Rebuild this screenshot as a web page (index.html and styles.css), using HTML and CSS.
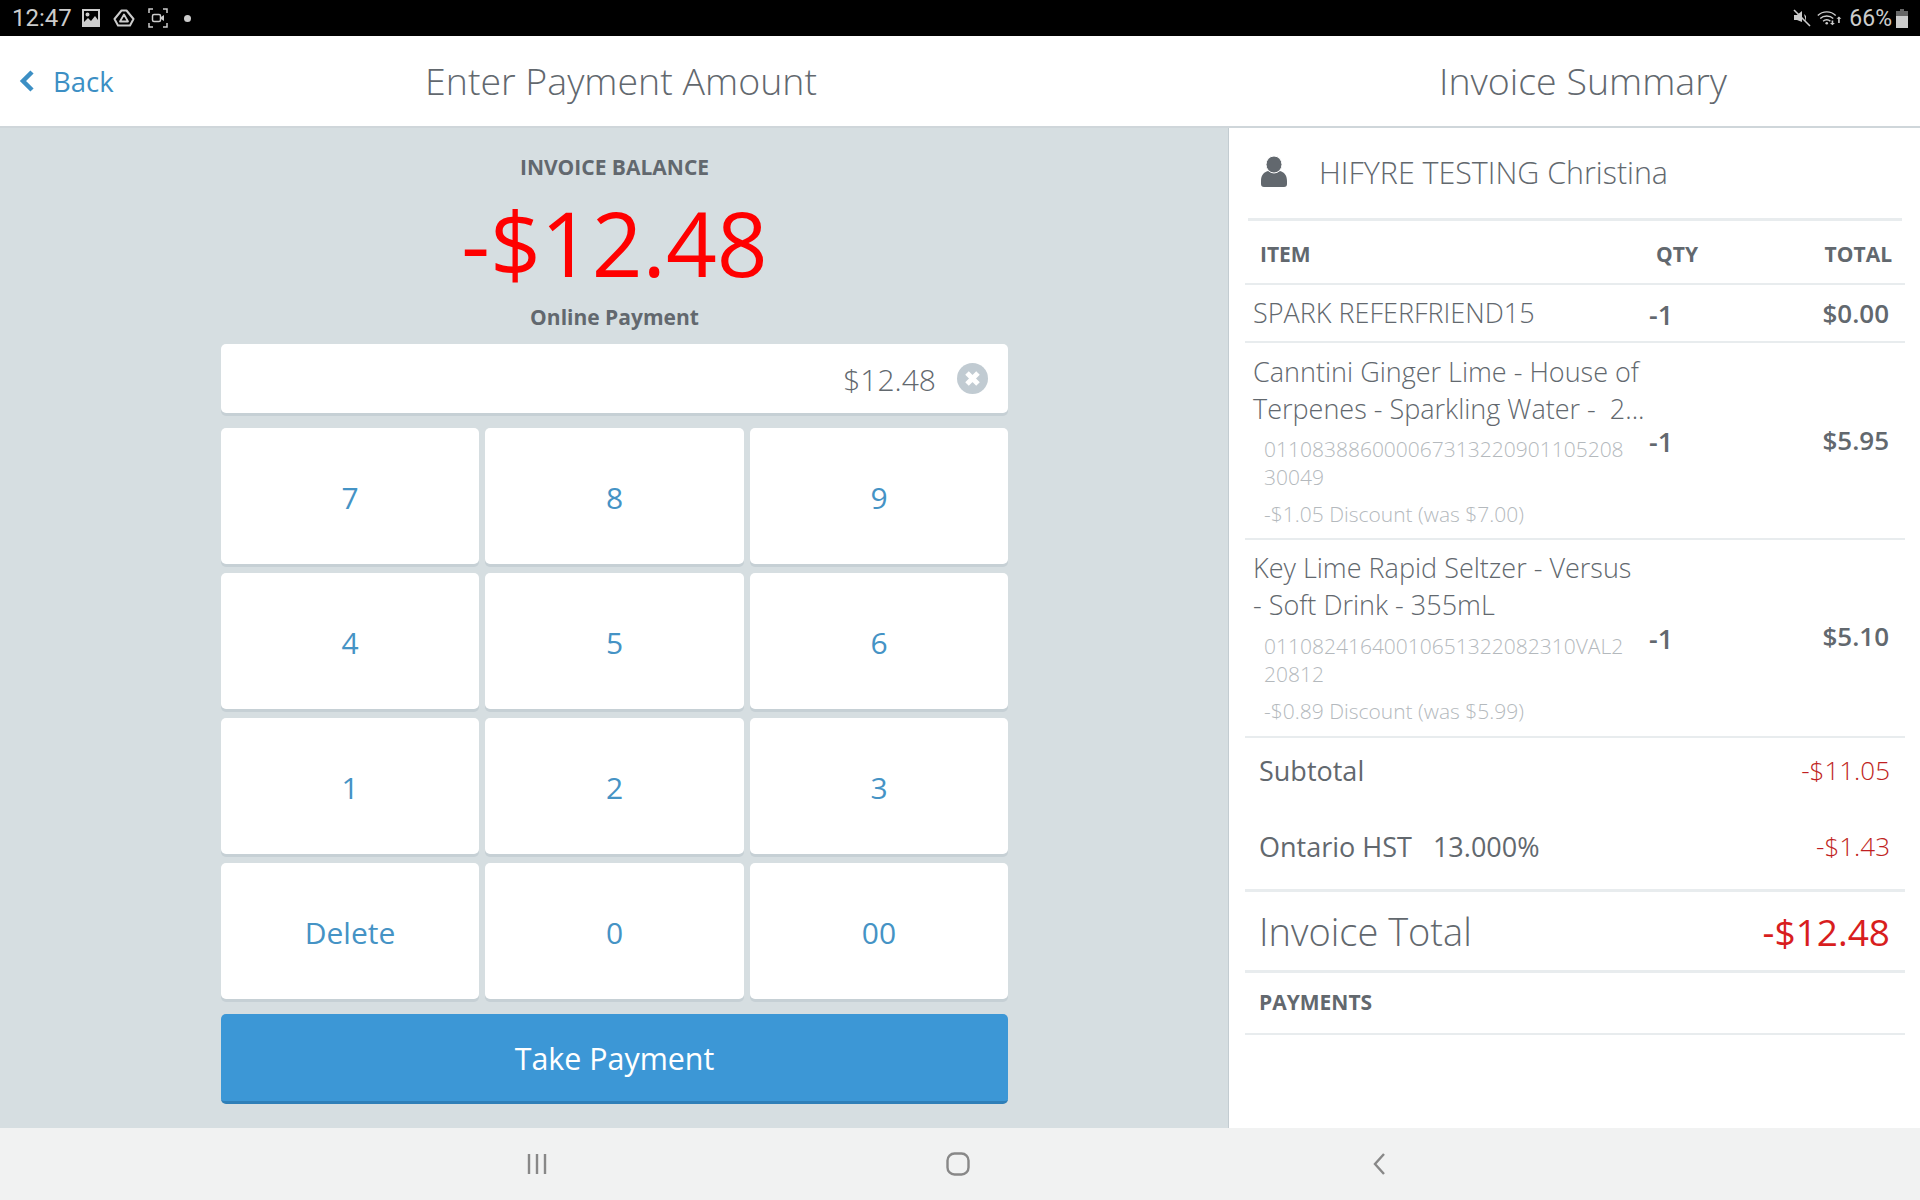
FILE: index.html
```html
<!DOCTYPE html>
<html lang="en">
<head>
<meta charset="utf-8">
<title>Enter Payment Amount</title>
<link rel="stylesheet" href="styles.css">
</head>
<body>
<div class="app">
  <div class="status">
    <div class="status-left">
      <span class="clock">12:47</span>
      <svg class="si" width="20" height="20" viewBox="0 0 20 20"><path fill="#ccc" fill-rule="evenodd" d="M1 1h18v18H1zM3 3v11l4-4 3 3 4-5 3 4V3zM6.500 4.500a2 2 0 1 1 0 4 2 2 0 0 1 0-4z"/></svg>
      <svg class="si si-drive" width="22" height="20" viewBox="0 0 22 20"><path fill="none" stroke="#ccc" stroke-width="2" stroke-linejoin="round" d="M8.500 2.500h5L20.500 11 17 17.500H5L1.500 11z"/><path fill="none" stroke="#ccc" stroke-width="1.800" stroke-linejoin="round" d="M11 6.500l4 7H7z"/></svg>
      <svg class="si" width="20" height="20" viewBox="0 0 20 20"><path fill="none" stroke="#ccc" stroke-width="1.500" d="M1 5V1h4M15 1h4v4M19 15v4h-4M5 19H1v-4"/><rect x="4.500" y="6.500" width="8" height="7" rx="1.500" fill="none" stroke="#ccc" stroke-width="1.500"/><path fill="#ccc" d="M13 9l3-2v6l-3-2z"/></svg>
      <span class="dot"></span>
    </div>
    <div class="status-right">
      <svg class="mute" width="18" height="18" viewBox="0 0 18 18"><path fill="#ccc" d="M1 6h3l5-4v11L4 11H1zM11 5l2 2v6z"/><path stroke="#ccc" stroke-width="1.600" d="M1 1l16 16"/></svg>
      <svg class="wifi" width="26" height="18" viewBox="0 0 32 20"><g fill="none" stroke="#ccc" stroke-width="1.700"><path d="M1 7c6-6 16-6 22 0"/><path d="M4 10.500c4-4 12-4 16 0"/><path d="M7.500 14c2.500-2.500 6.500-2.500 9 0"/></g><circle cx="12" cy="16.500" r="1.600" fill="#ccc"/><path fill="#ccc" d="M18 13h2v3h2l-3 3-3-3h2zM27 8l3 3h-2v5h-2v-5h-2z"/></svg>
      <span class="pct">66%</span>
      <svg class="battery" width="12" height="19" viewBox="0 0 12 19"><path fill="#666" d="M4 0h4v2h4v17H0V2h4z"/><rect y="7" width="12" height="12" fill="#ccc"/></svg>
    </div>
  </div>

  <header class="topbar">
    <div class="back">
      <svg width="16" height="22" viewBox="0 0 16 22"><path fill="none" stroke="#3c8fc4" stroke-width="4.500" d="M13 2L4 11l9 9"/></svg>
      <span>Back</span>
    </div>
    <h1 class="title title-main">Enter Payment Amount</h1>
    <h1 class="title title-side">Invoice Summary</h1>
  </header>

  <main class="content">
    <section class="pay">
      <div class="pay-label">INVOICE BALANCE</div>
      <div class="pay-amount">-$12.48</div>
      <div class="pay-method">Online Payment</div>
      <div class="pay-input">
        <span class="pay-value">$12.48</span>
        <svg width="31" height="31" viewBox="0 0 31 31"><circle cx="15.500" cy="15.500" r="15.500" fill="#c1cbd2"/><path stroke="#fff" stroke-width="5" d="M10 10l11 11M21 10L10 21"/></svg>
      </div>
      <div class="keys">
        <div class="key">7</div><div class="key">8</div><div class="key">9</div>
        <div class="key">4</div><div class="key">5</div><div class="key">6</div>
        <div class="key">1</div><div class="key">2</div><div class="key">3</div>
        <div class="key">Delete</div><div class="key">0</div><div class="key">00</div>
      </div>
      <button class="take">Take Payment</button>
    </section>

    <aside class="summary">
      <div class="customer">
        <svg width="26" height="31" viewBox="0 0 26 31"><path fill="#62686e" d="M0 25c0-6 3-9 7-10 3 2 9 2 12 0 4 1 7 4 7 10v3c0 2-1 3-3 3H3c-2 0-3-1-3-3z"/><ellipse cx="13" cy="8.500" rx="8" ry="8.500" fill="#62686e" stroke="#fff"/></svg>
        <span class="customer-name">HIFYRE TESTING Christina</span>
      </div>
      <div class="thead">
        <span>ITEM</span><span class="th-qty">QTY</span><span class="th-total">TOTAL</span>
      </div>
      <div class="row row-first">
        <div class="item"><div class="name">SPARK REFERFRIEND15</div></div>
        <div class="qty">-1</div><div class="total">$0.00</div>
      </div>
      <div class="row row-big">
        <div class="item">
          <div class="name">Canntini Ginger Lime - House of Terpenes - Sparkling Water -&nbsp; 2...</div>
          <div class="code">011083886000067313220901105208 30049</div>
          <div class="disc">-$1.05 Discount (was $7.00)</div>
        </div>
        <div class="qty">-1</div><div class="total">$5.95</div>
      </div>
      <div class="row row-big row-last">
        <div class="item">
          <div class="name">Key Lime Rapid Seltzer - Versus - Soft Drink - 355mL</div>
          <div class="code">01108241640010651322082310VAL2 20812</div>
          <div class="disc">-$0.89 Discount (was $5.99)</div>
        </div>
        <div class="qty">-1</div><div class="total">$5.10</div>
      </div>
      <div class="totals">
        <div class="line"><span>Subtotal</span><span class="neg">-$11.05</span></div>
        <div class="line"><span>Ontario HST &nbsp; 13.000%</span><span class="neg">-$1.43</span></div>
      </div>
      <div class="grand"><span>Invoice Total</span><span class="grand-val">-$12.48</span></div>
      <div class="payments">PAYMENTS</div>
    </aside>
  </main>

  <nav class="navbar">
    <svg class="nav-recent" width="24" height="24" viewBox="0 0 24 24"><path stroke="#888" stroke-width="2.400" d="M4 2v20M12 2v20M20 2v20"/></svg>
    <svg class="nav-home" width="24" height="24" viewBox="0 0 24 24"><rect x="1.500" y="1.500" width="21" height="21" rx="7" fill="none" stroke="#888" stroke-width="2.400"/></svg>
    <svg class="nav-back" width="14" height="24" viewBox="0 0 14 24"><path fill="none" stroke="#888" stroke-width="2.400" d="M12 2L3 12l9 10"/></svg>
  </nav>
</div>
</body>
</html>
```
FILE: styles.css
```css
* { box-sizing: border-box; }
html, body { margin: 0; padding: 0; }
body { font-family: "Open Sans", "Liberation Sans", sans-serif; color: #62686e; background: #fff; }
.app { width: 1920px; height: 1200px; display: flex; flex-direction: column; overflow: hidden; }

.status { height: 36px; flex: none; background: #000; display: flex; justify-content: space-between; align-items: center; padding: 0 12px 0 12px; color: #ccc; font-family: Roboto, sans-serif; }
.status-left, .status-right { display: flex; align-items: center; }
.clock { font-size: 24px; width: 69px; }
.si { margin-right: 12px; }
.si-drive { margin-right: 13px; }
.dot { width: 7px; height: 7px; border-radius: 50%; background: #ccc; margin-left: 4px; }
.mute { margin-right: 6px; }
.wifi { margin-right: 6px; }
.pct { font-size: 23px; }
.battery { flex: none; margin-left: 4px; }

.topbar { height: 92px; flex: none; background: #fff; border-bottom: 2px solid #cfd6da; display: flex; align-items: center; }
.back { display: flex; align-items: center; gap: 18px; margin-left: 19px; width: 220px; color: #3c8fc4; font-size: 27.500px; font-weight: 400; }
.title { margin: 0 0 2px; font-size: 37.500px; font-weight: 300; color: #62686e; text-align: center; white-space: nowrap; }
.title-main { width: 768px; margin-left: -2px; }
.title-side { flex: 1; margin-left: 241px; width: 0; }

.content { flex: 1; display: flex; min-height: 0; }
.pay { width: 1229px; background: #d6dee1; border-right: 1px solid #c3ccd1; padding: 24px 220px 0 221px; display: flex; flex-direction: column; align-items: stretch; }
.pay-label { height: 30px; line-height: 30px; font-size: 21px; font-weight: 700; text-align: center; }
.pay-amount { height: 100px; line-height: 100px; margin-top: 11px; font-size: 89px; color: #f00; text-align: center; font-weight: 400; }
.pay-method { height: 30px; line-height: 30px; margin-top: 9px; font-size: 21px; font-weight: 700; text-align: center; }
.pay-input { height: 69px; margin-top: 12px; background: #fff; border-radius: 5px; box-shadow: 0 3px 0 #c6d0d5; display: flex; justify-content: flex-end; align-items: center; gap: 21px; padding-right: 20px; font-size: 30px; font-weight: 300; }
.pay-value { padding-top: 2px; }
.keys { margin-top: 15px; display: grid; grid-template-columns: 258px 259px 258px; grid-auto-rows: 136px; column-gap: 6px; row-gap: 9px; }
.key { background: #fff; border-radius: 5px; box-shadow: 0 3px 0 #c6d0d5; display: flex; align-items: center; justify-content: center; padding-top: 2px; color: #4593c5; font-size: 30px; font-weight: 400; }
.take { display: block; margin-top: 15px; height: 90px; width: 100%; border: 0; border-bottom: 3px solid #2f7fb8; border-radius: 5px; padding: 2px 0 0; background: #3c97d6; color: #fff; font-family: inherit; font-size: 30.400px; font-weight: 400; }

.summary { flex: 1; background: #fff; padding: 0 15px 0 16px; min-width: 0; }
.customer { height: 93px; margin: 0 3px; border-bottom: 3px solid #e8ecee; display: flex; align-items: center; padding-left: 13px; padding-bottom: 3px; gap: 32px; font-size: 30.400px; font-weight: 300; }
.customer-name { padding-top: 2px; }
.thead { height: 64px; border-bottom: 2px solid #e8ecee; display: grid; grid-template-columns: 396px 1fr auto; align-items: center; padding: 4px 13px 0 15px; font-size: 21px; font-weight: 700; }
.row { display: grid; grid-template-columns: 396px 1fr auto; border-bottom: 2px solid #e8ecee; padding: 0 16px 0 8px; align-items: center; }
.row-first { height: 58px; }
.row-first .name { padding-bottom: 2px; }
.row-big { padding-top: 10px; padding-bottom: 10px; }
.row-last { padding-top: 9px; padding-bottom: 11px; }
.row-last .code { padding-top: 9px; }
.row-big .total { padding-bottom: 2px; }
.item { min-width: 0; }
.name { font-size: 27px; font-weight: 300; line-height: 37px; padding-right: 2px; }
.code { font-size: 21px; font-weight: 300; line-height: 28px; color: #b4b9bd; padding: 8px 18px 0 11px; }
.disc { font-size: 21px; font-weight: 300; line-height: 28px; color: #b4b9bd; padding: 9px 0 0 11px; }
.qty { font-size: 27px; font-weight: 600; padding-top: 2px; }
.total { font-size: 26px; font-weight: 600; }
.totals { border-bottom: 3px solid #e8ecee; padding: 0 15px 0 14px; height: 154px; display: flex; flex-direction: column; gap: 12px; }
.line { display: flex; justify-content: space-between; align-items: center; height: 64px; font-size: 27px; font-weight: 400; }
.neg { color: #c01f22; font-size: 26px; font-weight: 300; }
.grand { height: 81px; border-bottom: 3px solid #e8ecee; display: flex; justify-content: space-between; align-items: center; padding: 0 15px 0 14px; font-size: 38px; font-weight: 300; }
.grand-val { color: #d81e1e; font-size: 37px; font-weight: 400; }
.payments { height: 62px; border-bottom: 2px solid #e8ecee; display: flex; align-items: center; padding-left: 14px; padding-bottom: 2px; font-size: 21px; font-weight: 700; }

.navbar { height: 72px; flex: none; background: #f1f2f2; display: flex; align-items: center; padding-left: 525px; }
.nav-home { margin-left: 397px; }
.nav-back { margin-left: 402px; }
```
